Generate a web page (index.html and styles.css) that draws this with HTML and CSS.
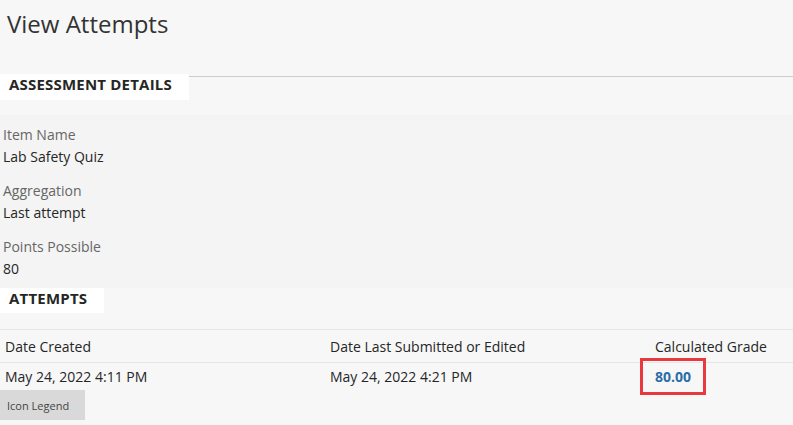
FILE: index.html
```html
<!DOCTYPE html>
<html lang="en">
<head>
    <meta charset="UTF-8">
    <title>View Attempts</title>
    <link rel="stylesheet" href="styles.css">
</head>
<body>

<h1 class="page-title">View Attempts</h1>

<div class="section-head">
  <h2>Assessment Details</h2>
  <div class="rule"></div>
</div>

<div class="details">
  <div class="field">
    <div class="label">Item Name</div>
    <div class="value">Lab Safety Quiz</div>
  </div>
  <div class="field">
    <div class="label">Aggregation</div>
    <div class="value">Last attempt</div>
  </div>
  <div class="field">
    <div class="label">Points Possible</div>
    <div class="value">80</div>
  </div>
</div>

<div class="section-head attempts-head">
  <h2>Attempts</h2>
</div>

<div class="attempts">
  <div class="row head">
    <div class="cell">Date Created</div>
    <div class="cell">Date Last Submitted or Edited</div>
    <div class="cell">Calculated Grade</div>
  </div>
  <div class="row">
    <div class="cell">May 24, 2022 4:11 PM</div>
    <div class="cell">May 24, 2022 4:21 PM</div>
    <div class="cell"><span class="grade">80.00</span></div>
  </div>
</div>

<button class="legend-btn">Icon Legend</button>

</body>
</html>
```

FILE: styles.css
```css
body{
  margin:0;
  background-color:#f7f7f7;
  color:#333333;
  font-family:"Open Sans", "Liberation Sans", sans-serif;
  font-size:14px;
}

.page-title{
  margin:8px 0 0 0;
  padding-left:7px;
  font-size:24px;
  line-height:32px;
  font-weight:400;
  color:#333333;
}

/* section headings: white tab + grey rule */
.section-head{
  display:flex;
  align-items:flex-start;
  margin-top:34px;
}
.section-head h2{
  margin:0;
  background-color:#ffffff;
  padding:0 17px 6px 9px;
  line-height:20px;
  font-size:15px;
  font-weight:700;
  letter-spacing:0.2px;
  text-transform:uppercase;
  color:#262626;
}
.section-head .rule{
  flex:1;
  margin-top:2px;
  border-top:1px solid #cccccc;
}

.details{
  margin-top:15px;
  background-color:#f4f4f4;
  padding:9px 3px 8px 3px;
}
.field{
  margin-bottom:12px;
}
.field:last-child{
  margin-bottom:0;
}
.label{
  line-height:22px;
  color:#666666;
}
.value{
  line-height:22px;
  color:#262626;
}

.attempts-head{
  margin-top:0;
}
.attempts-head h2{
  padding-bottom:5px;
}

.attempts{
  margin-top:16px;
  border-top:1px solid #e6e6e6;
}
.row{
  display:grid;
  grid-template-columns:325px 325px 1fr;
}
.row .cell{
  padding:4px 5px 3px 5px;
  line-height:20px;
  color:#262626;
}
.row.head{
  border-bottom:1px solid #e6e6e6;
}
.row.head .cell{
  padding:7px 5px 5px 5px;
}

.grade{
  position:relative;
  font-weight:700;
  color:#2a6ea6;
}
/* highlight box drawn over the grade */
.grade::after{
  content:"";
  position:absolute;
  left:-15px;
  right:-15px;
  top:-9px;
  bottom:-9px;
  border:3px solid #e8393e;
}

.legend-btn{
  display:block;
  border:0;
  margin:0;
  width:85px;
  height:30px;
  padding:0 0 0 7px;
  text-align:left;
  background-color:#d9d9d9;
  color:#444444;
  font-family:"Open Sans", "Liberation Sans", sans-serif;
  font-size:11px;
}
```
